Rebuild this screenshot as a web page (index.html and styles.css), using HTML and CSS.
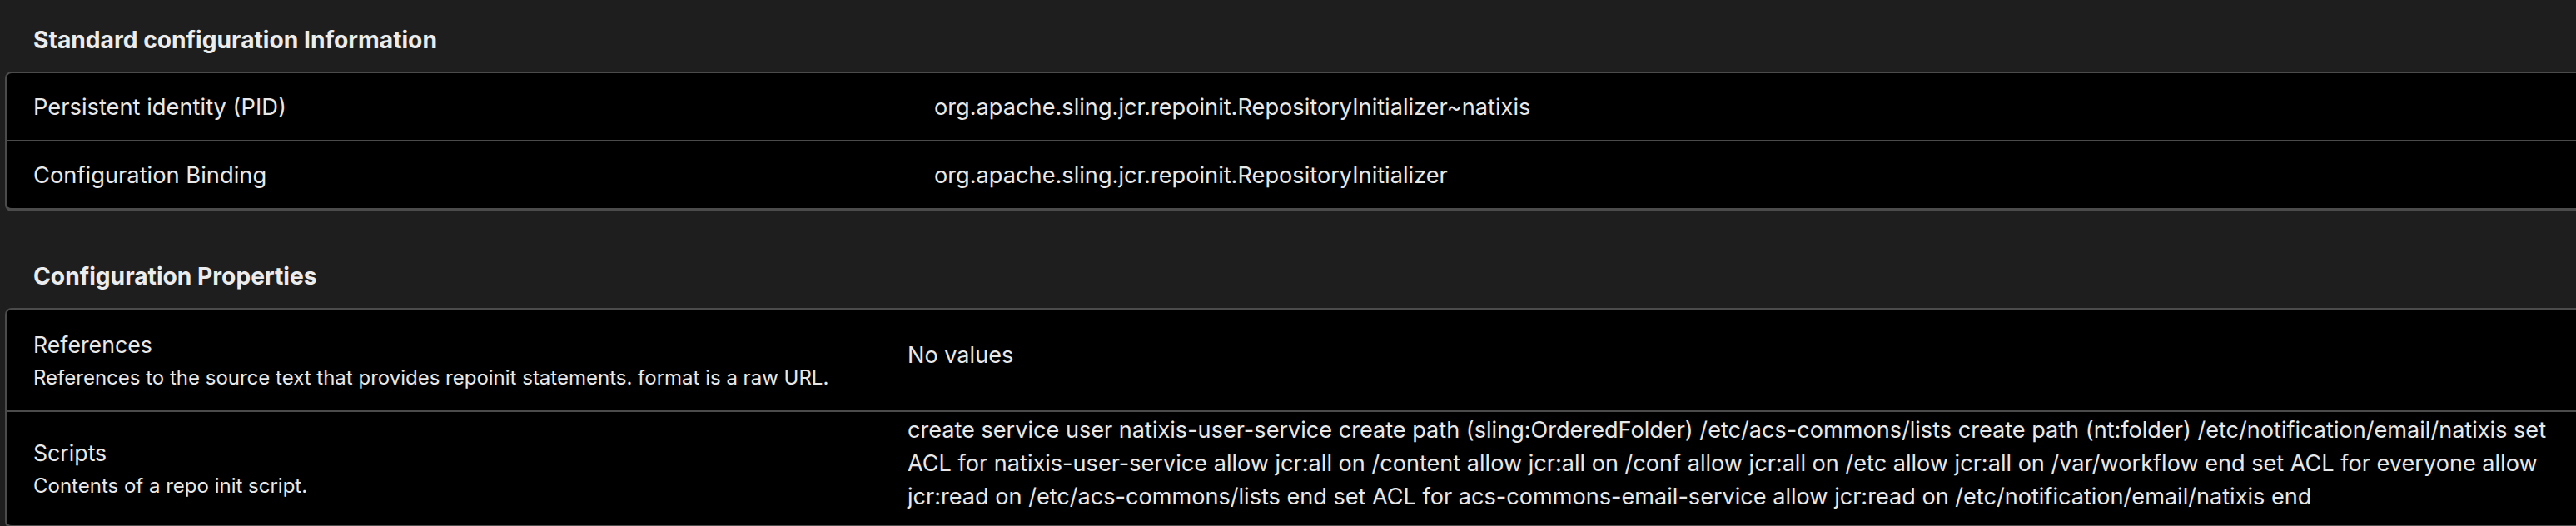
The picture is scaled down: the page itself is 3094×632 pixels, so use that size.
FILE: index.html
```html
<!DOCTYPE html>
<html lang="en">
<head>
<meta charset="utf-8">
<title>Configuration</title>
<link rel="stylesheet" href="styles.css">
</head>
<body>
<main class="page">
  <section class="section">
    <h2 class="section-title">Standard configuration Information</h2>
    <div class="panel panel-info">
      <div class="row row-info">
        <div class="label">Persistent identity (PID)</div>
        <div class="value">org.apache.sling.jcr.repoinit.RepositoryInitializer~natixis</div>
      </div>
      <div class="row row-info">
        <div class="label">Configuration Binding</div>
        <div class="value">org.apache.sling.jcr.repoinit.RepositoryInitializer</div>
      </div>
    </div>
  </section>
  <section class="section">
    <h2 class="section-title">Configuration Properties</h2>
    <div class="panel panel-props">
      <div class="row row-prop">
        <div class="label">
          <div class="prop-name">References</div>
          <div class="prop-desc">References to the source text that provides repoinit statements. format is a raw URL.</div>
        </div>
        <div class="value">No values</div>
      </div>
      <div class="row row-prop">
        <div class="label">
          <div class="prop-name">Scripts</div>
          <div class="prop-desc">Contents of a repo init script.</div>
        </div>
        <div class="value">create service user natixis-user-service create path (sling:OrderedFolder) /etc/acs-commons/lists create path (nt:folder) /etc/notification/email/natixis set ACL for natixis-user-service allow jcr:all on /content allow jcr:all on /conf allow jcr:all on /etc allow jcr:all on /var/workflow end set ACL for everyone allow jcr:read on /etc/acs-commons/lists end set ACL for acs-commons-email-service allow jcr:read on /etc/notification/email/natixis end</div>
      </div>
    </div>
  </section>
</main>
</body>
</html>
```
FILE: styles.css
```css
html, body {
  margin: 0;
  padding: 0;
  background: #1e1e1e;
  overflow: hidden;
}

body {
  font-family: Inter, "Noto Sans", sans-serif;
  color: #e8e8e8;
}

.page {
  width: 3100px;
  padding: 30px 0 0 6px;
}

.section-title {
  margin: 0 0 20px 34px;
  font-size: 28.2px;
  line-height: 36px;
  font-weight: 700;
  color: #ececec;
}

.section + .section .section-title {
  margin-top: 60px;
}

.panel {
  background: #000;
  border: 2px solid #4b4b4b;
  border-bottom-width: 4px;
  border-right: none;
  border-radius: 8px 0 0 8px;
}

.row {
  display: grid;
  grid-template-columns: 1082px 1fr;
  align-items: center;
}

.row + .row {
  border-top: 2px solid #4b4b4b;
}

.row-info {
  height: 80px;
}

.row-info .label {
  padding-left: 32px;
  font-size: 27.3px;
}

.row-info .value {
  padding-left: 32px;
  font-size: 27.2px;
}

.row-prop {
  min-height: 121px;
}

.row-prop .label {
  padding: 23px 32px;
}

.prop-name {
  font-size: 26.7px;
  line-height: 36px;
}

.prop-desc {
  font-size: 24px;
  line-height: 32px;
  margin-top: 6px;
}

.row-prop .value {
  padding: 2px 16px 14px 0;
  font-size: 27.1px;
  line-height: 40px;
}
```
